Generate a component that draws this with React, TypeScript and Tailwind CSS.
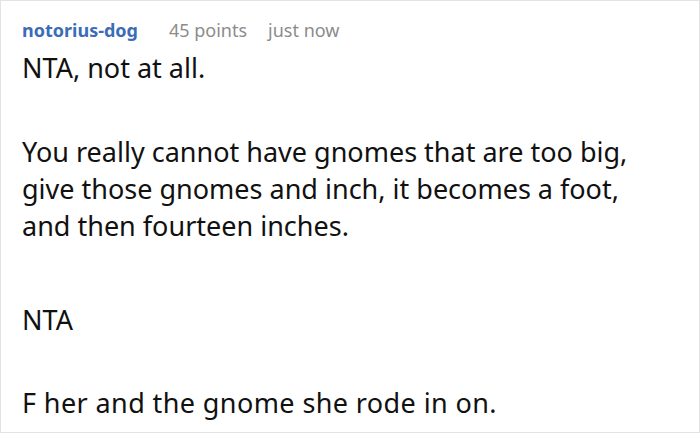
import React from 'react'

export default function App() {
  return (
    <div className="w-[700px] h-[433px] bg-white border border-[#e3e3e3] overflow-hidden font-['Noto_Sans',sans-serif]">
      <div className="pl-[21px] pt-[17px]">
        {/* header */}
        <div className="flex items-baseline text-[18px] leading-[24px]">
          <span className="font-bold text-[#3a6cb7]">notorius-dog</span>
          <span className="ml-[31px] text-[#8c8c8c]">45 points</span>
          <span className="ml-[21px] text-[#8c8c8c]">just now</span>
        </div>

        {/* comment body */}
        <div className="mt-[7px] text-[27px] leading-[37px] text-[#111111]">
          <p>NTA, not at all.</p>
          <p className="mt-[47px]">
            You really cannot have gnomes that are too big,
            <br />
            give those gnomes and inch, it becomes a foot,
            <br />
            and then fourteen inches.
          </p>
          <p className="mt-[57px]">NTA</p>
          <p className="mt-[46px] tracking-[0.4px]">F her and the gnome she rode in on.</p>
        </div>
      </div>
    </div>
  )
}
